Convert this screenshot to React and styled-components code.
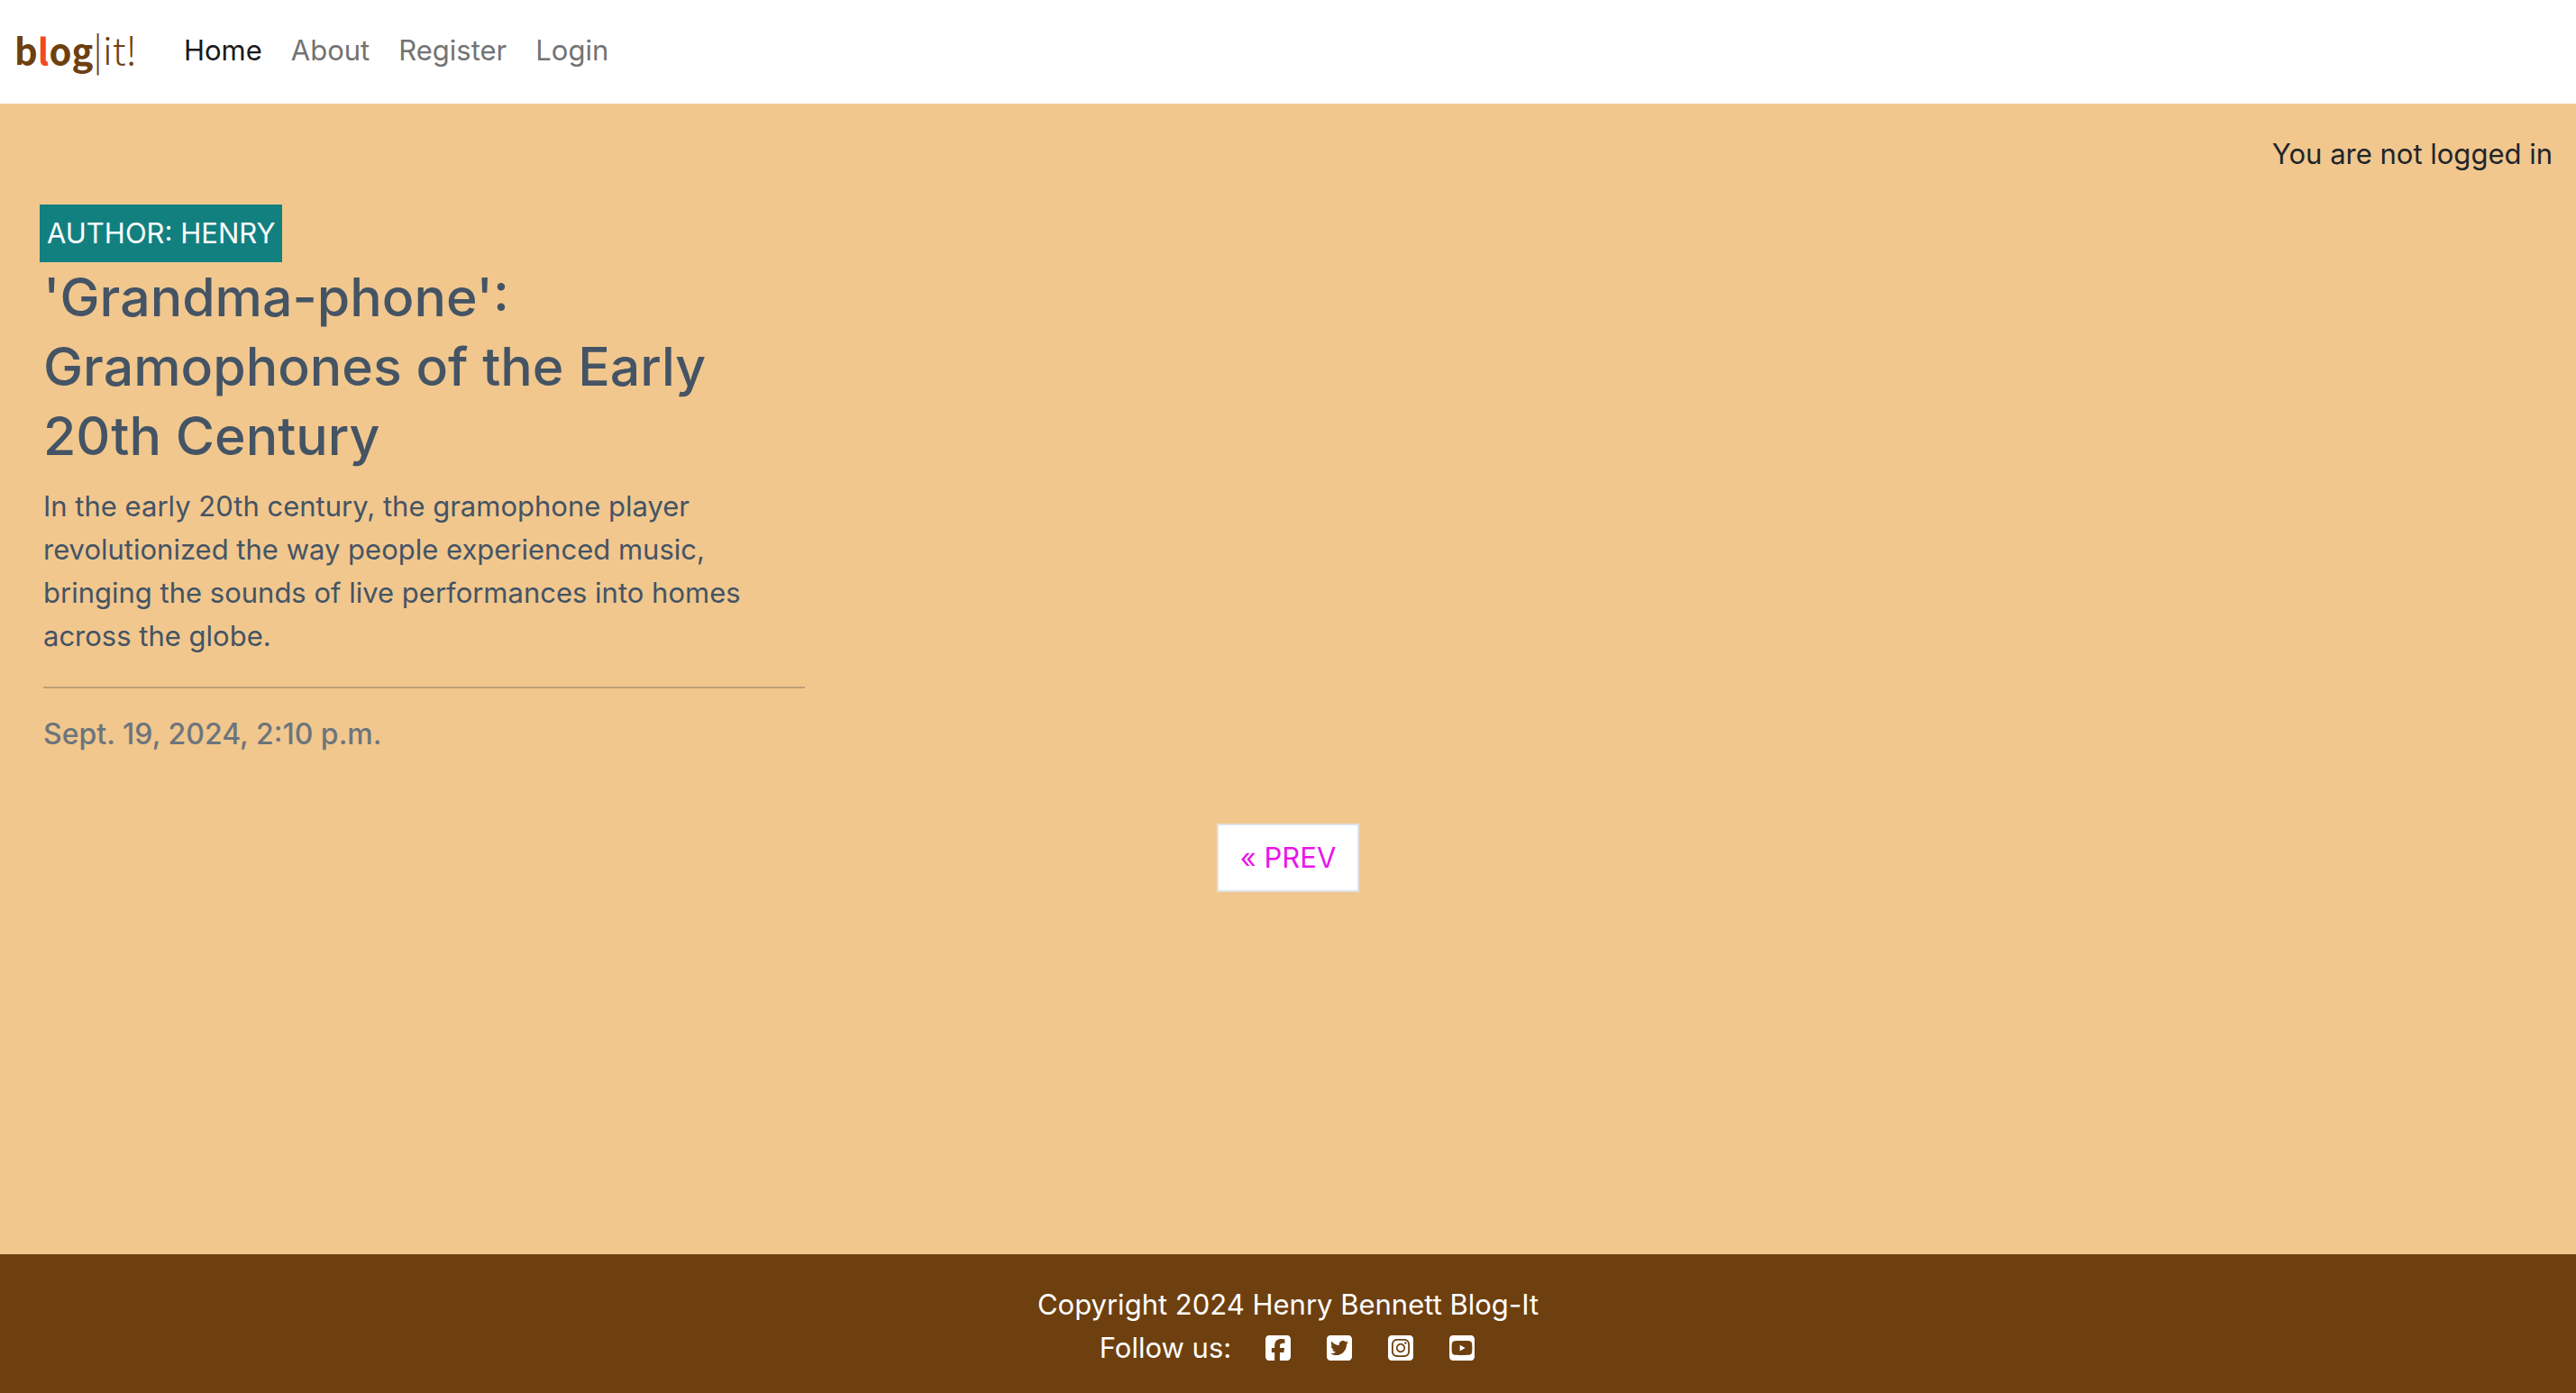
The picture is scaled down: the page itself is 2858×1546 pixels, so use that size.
import React from "react";
import styled, { createGlobalStyle } from "styled-components";
import {
  FaSquareFacebook,
  FaSquareTwitter,
  FaSquareInstagram,
  FaSquareYoutube,
} from "react-icons/fa6";

const GlobalStyle = createGlobalStyle`
  *, *::before, *::after { box-sizing: border-box; }
  body {
    margin: 0;
    background: #f1c78e;
    color: #212529;
    font-family: Inter, "Liberation Sans", sans-serif;
    font-size: 31px;
    line-height: 48px;
  }
`;

const Page = styled.div`
  display: flex;
  flex-direction: column;
  min-height: 100vh;
`;

const Navbar = styled.header`
  display: flex;
  align-items: center;
  gap: 36px;
  padding: 16px 16px 19px;
  background: #ffffff;
`;

const Brand = styled.a`
  padding-bottom: 4px;
  color: #6e400f;
  font-family: "Noto Sans CJK JP", "Open Sans", sans-serif;
  font-size: 42px;
  font-weight: 300;
  line-height: 60px;
  text-decoration: none;
  white-space: nowrap;
`;

const BrandBold = styled.span`
  font-size: 40px;
  font-weight: 700;
`;

const BrandAccent = styled.span`
  color: #f04a23;
`;

const NavList = styled.ul`
  display: flex;
  margin: 0;
  padding: 0;
  list-style: none;
`;

const NavLink = styled.a`
  display: block;
  padding: 16px;
  color: ${({ $active }) => ($active ? "#191919" : "#737373")};
  text-decoration: none;
`;

const Main = styled.main`
  flex: 1;
`;

const LoginStatus = styled.p`
  margin: 0;
  padding: 32px 26px 0;
  text-align: right;
`;

const PostGrid = styled.section`
  display: grid;
  grid-template-columns: repeat(3, 1fr);
  padding: 32px 32px 0 16px;
`;

const PostCard = styled.article`
  padding: 0 60px 0 32px;
`;

const AuthorTag = styled.p`
  width: fit-content;
  margin: 0 0 0 -4px;
  padding: 8px;
  background: #138080;
  color: #ffffff;
  text-transform: uppercase;
`;

const PostLink = styled.a`
  display: block;
  color: #445464;
  text-decoration: none;
`;

const PostTitle = styled.h2`
  margin: 0 0 16px;
  padding-right: 32px;
  font-size: 59px;
  font-weight: 500;
  line-height: 77px;
`;

const Excerpt = styled.p`
  margin: 0;
  padding-right: 32px;
`;

const Divider = styled.hr`
  height: 2px;
  margin: 32px 0;
  border: 0;
  background: #212529;
  opacity: 0.25;
`;

const PostDate = styled.time`
  display: block;
  color: #6c757d;
  font-size: 32px;
  font-weight: 500;
  line-height: 38px;
`;

const Pagination = styled.nav`
  display: flex;
  justify-content: center;
  padding-top: 80px;
`;

const PageLink = styled.a`
  padding: 12px 24px;
  border: 2px solid #dee2e6;
  background: #ffffff;
  color: #e815e8;
  text-decoration: none;
`;

const Footer = styled.footer`
  padding: 32px 24px 26px;
  background: #6e400f;
  color: #ffffff;
  text-align: center;
`;

const FooterText = styled.p`
  margin: 0;
`;

const FollowRow = styled.div`
  display: flex;
  align-items: center;
  justify-content: center;
  gap: 36px;
`;

const SocialLink = styled.a`
  display: flex;
  color: inherit;
  font-size: 32px;
`;

const navItems = [
  { label: "Home", active: true },
  { label: "About" },
  { label: "Register" },
  { label: "Login" },
];

const socials = [
  { name: "Facebook", Icon: FaSquareFacebook },
  { name: "Twitter", Icon: FaSquareTwitter },
  { name: "Instagram", Icon: FaSquareInstagram },
  { name: "YouTube", Icon: FaSquareYoutube },
];

export default function App() {
  return (
    <Page>
      <GlobalStyle />
      <Navbar>
        <Brand href="#">
          <BrandBold>
            b<BrandAccent>l</BrandAccent>og
          </BrandBold>
          |it!
        </Brand>
        <nav>
          <NavList>
            {navItems.map(({ label, active }) => (
              <li key={label}>
                <NavLink href="#" $active={active}>
                  {label}
                </NavLink>
              </li>
            ))}
          </NavList>
        </nav>
      </Navbar>
      <Main>
        <LoginStatus>You are not logged in</LoginStatus>
        <PostGrid>
          <PostCard>
            <AuthorTag>Author: Henry</AuthorTag>
            <PostLink href="#">
              <PostTitle>
                'Grandma-phone': Gramophones of the Early 20th Century
              </PostTitle>
              <Excerpt>
                In the early 20th century, the gramophone player revolutionized
                the way people experienced music, bringing the sounds of live
                performances into homes across the globe.
              </Excerpt>
            </PostLink>
            <Divider />
            <PostDate dateTime="2024-09-19T14:10">
              Sept. 19, 2024, 2:10 p.m.
            </PostDate>
          </PostCard>
        </PostGrid>
        <Pagination>
          <PageLink href="#">« PREV</PageLink>
        </Pagination>
      </Main>
      <Footer>
        <FooterText>Copyright 2024 Henry Bennett Blog-It</FooterText>
        <FollowRow>
          <span>Follow us:</span>
          {socials.map(({ name, Icon }) => (
            <SocialLink key={name} href="#" aria-label={name}>
              <Icon />
            </SocialLink>
          ))}
        </FollowRow>
      </Footer>
    </Page>
  );
}
